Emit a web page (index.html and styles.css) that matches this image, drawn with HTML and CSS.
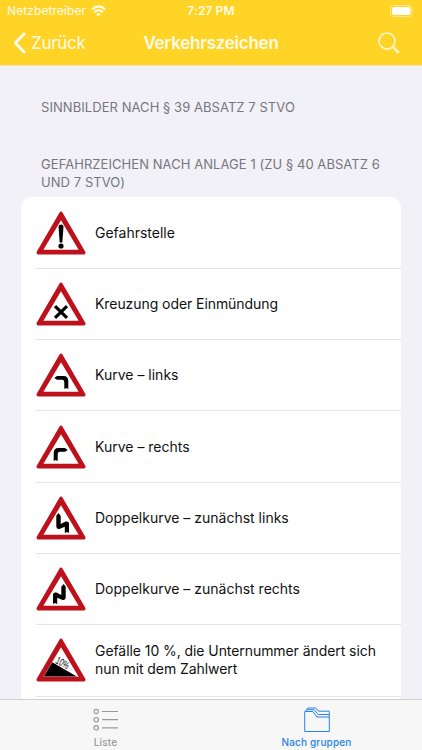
FILE: index.html
```html
<!DOCTYPE html>
<html lang="de">
<head>
<meta charset="utf-8">
<title>Verkehrszeichen</title>
<link rel="stylesheet" href="styles.css">
</head>
<body>
<svg class="defs" width="0" height="0" aria-hidden="true">
  <symbol id="warn" viewBox="0 0 50 44">
    <path d="M25 2.300 47.800 41.700H2.200Z" fill="#bd111b" stroke="#bd111b" stroke-width="3.400" stroke-linejoin="round"/>
    <path d="M25 9.300 42.600 38.800H7.400Z" fill="#fff"/>
  </symbol>
</svg>
<div class="app">
  <header class="header">
    <div class="status">
      <div class="carrier"><span>Netzbetreiber</span>
        <svg width="15" height="12" viewBox="0 0 16 12" fill="none" stroke="#fffbe9" stroke-width="2.300"><path d="M1 4.400Q8-2.100 15 4.400M3.500 7.200Q8 3.200 12.500 7.200"/><path d="M8 11.800 5.500 9.200Q8 7.200 10.500 9.200Z" fill="#fffbe9" stroke="none"/></svg>
      </div>
      <div class="time">7:27 PM</div>
      <svg class="battery" width="25" height="12" viewBox="0 0 25 12"><rect x=".5" y=".5" width="21.500" height="11" rx="3.200" fill="none" stroke="#ffe98f"/><rect x="2" y="2" width="18.500" height="8" rx="2" fill="#fff"/><path d="M23.300 4.200q1.500 1.800 0 3.600Z" fill="#ffe98f"/></svg>
    </div>
    <nav class="nav">
      <div class="back"><svg width="14" height="22" viewBox="0 0 14 22" fill="none" stroke="#fffbe9" stroke-width="3" stroke-linecap="round" stroke-linejoin="round"><path d="M11 2 2.300 11l8.700 9"/></svg><span>Zurück</span></div>
      <h1>Verkehrszeichen</h1>
      <svg class="search" width="22" height="22" viewBox="0 0 22 22" fill="none" stroke="#fff6cf"><circle cx="9" cy="9" r="8" stroke-width="1.600"/><path d="m14.800 14.800 6 6" stroke-width="2.500"/></svg>
    </nav>
  </header>
  <main class="content">
    <h2 class="first">SINNBILDER NACH § 39 ABSATZ 7 STVO</h2>
    <h2 class="second">GEFAHRZEICHEN NACH ANLAGE 1 (ZU § 40 ABSATZ 6<br>UND 7 STVO)</h2>
    <ul class="card">
      <li><svg class="sign" viewBox="0 0 50 44"><use href="#warn"/><path d="M22.500 15.700Q22.500 13.500 25 13.500t2.500 2.200L26.300 31.500h-2.600Z"/><circle cx="25" cy="35" r="2.600"/></svg><p>Gefahrstelle</p></li>
      <li><svg class="sign" viewBox="0 0 50 44"><use href="#warn"/><path d="m19 24.200 12 11.600m0-11.600L19 35.800" stroke="#000" stroke-width="3.200"/></svg><p class="tight">Kreuzung oder Einmündung</p></li>
      <li><svg class="sign" viewBox="0 0 50 44"><use href="#warn"/><path d="m18.300 25 2.700-1.900h6.500q4.800 0 4.800 5.200V36l-2-.9-2 .9v-6.800q0-2.400-2.300-2.400h-5Z"/></svg><p>Kurve – links</p></li>
      <li><svg class="sign" viewBox="0 0 50 44"><use href="#warn"/><path d="m31.700 25-2.700-1.900h-6.500q-4.800 0-4.800 5.200V36l2-.9 2 .9v-6.800q0-2.400 2.300-2.400h5Z"/></svg><p>Kurve – rechts</p></li>
      <li><svg class="sign" viewBox="0 0 50 44"><use href="#warn"/><path d="m22.300 17 2.400 2.700v8.300l4.800-2.400q3.500-.8 3.500 2.500V37l-2-1-2.200 1v-6.300l-4.800 2q-3.700 1-3.700-2.200V19.700Z"/></svg><p>Doppelkurve – zunächst links</p></li>
      <li><svg class="sign" viewBox="0 0 50 44"><use href="#warn"/><path d="m27.700 17-2.400 2.700v8.300l-4.800-2.400q-3.500-.8-3.500 2.500V37l2-1 2.200 1v-6.300l4.800 2q3.700 1 3.700-2.200V19.700Z"/></svg><p>Doppelkurve – zunächst rechts</p></li>
      <li><svg class="sign" viewBox="0 0 50 44"><use href="#warn"/><path d="m16.300 24.300 24.500 14.100H7.800Z"/><text x="18.800" y="24.700" transform="rotate(29 18.800 24.700)" textLength="14" lengthAdjust="spacingAndGlyphs">10%</text></svg><p class="tight">Gefälle 10 %, die Unternummer ändert sich<br>nun mit dem Zahlwert</p></li>
      <li class="peek"></li>
    </ul>
  </main>
  <footer class="tabs">
    <div class="tab"><svg width="26" height="26" viewBox="0 0 26 26" fill="none" stroke="#999" stroke-width="1.200"><circle cx="3.200" cy="4.500" r="2.200"/><circle cx="3.200" cy="12.700" r="2.200"/><circle cx="3.200" cy="20.800" r="2.200"/><path d="M9 4.500h16M9 12.700h16M9 20.800h16"/></svg><span>Liste</span></div>
    <div class="tab active"><svg width="26" height="26" viewBox="0 0 26 26" fill="none" stroke="#2583ea"><path d="M.7 24.500V4.500h8.200l4 5.500h12.400v14.500ZM1.500 4.500 2.700 2.700h7.500l4 4.800h11.100V10M2.700 2.700 3.800 1h8l2.600 3.200h10.900v3.300"/></svg><span>Nach gruppen</span></div>
  </footer>
</div>
</body>
</html>
```

FILE: styles.css
```css
* { box-sizing: border-box; }
body { margin: 0; font-family: Inter, "Liberation Sans", sans-serif; background: #f2f1f7; }
.defs { display: block; }
.app { width: 422px; height: 750px; display: flex; flex-direction: column; overflow: hidden; }
.header { flex: none; height: 66px; background: #ffd426; border-bottom: 1px solid #eee3ae; color: #fffbe9; }
.status { height: 22px; display: grid; grid-template-columns: 1fr auto 1fr; align-items: center; padding: 0 7px; font-size: 12px; line-height: 22px; }
.carrier { display: flex; align-items: center; gap: 5px; letter-spacing: .1px; }
.time { font-weight: 600; letter-spacing: .1px; }
.battery { justify-self: end; }
.nav { height: 42px; display: grid; grid-template-columns: 1fr auto 1fr; align-items: center; padding: 0 22px; }
.back { display: flex; align-items: center; gap: 4px; margin-left: -9px; font-size: 17px; letter-spacing: -.3px; }
h1 { margin: 0; font-size: 17px; font-weight: 600; letter-spacing: -.25px; }
.search { justify-self: end; }
.content { flex: 1; min-height: 0; overflow: hidden; padding: 0 21px; }
h2 { margin: 0; padding-left: 20px; font-size: 13px; line-height: 18.500px; font-weight: 400; letter-spacing: .06px; color: #77767d; white-space: nowrap; }
.first { padding-top: 32px; }
.second { padding-top: 38px; }
.card { list-style: none; margin: 5px 0 0; padding: 1px 0 0 15px; background: #fff; border-radius: 10px 10px 0 0; }
.card li { height: 71.300px; display: flex; align-items: center; border-bottom: 1px solid #e4e4e7; }
.card .peek { border: 0; }
.sign { flex: none; width: 50px; height: 44px; margin-right: 9px; }
.sign text { font: 10.500px "Liberation Sans", sans-serif; }
.card p { margin: 0; font-size: 14px; line-height: 18px; color: #111; white-space: nowrap; }
.card .tight { letter-spacing: -.07px; }
.tabs { flex: none; height: 51px; display: flex; background: #f7f7f7; border-top: 1px solid #d0d0d2; }
.tab { flex: 1; display: flex; flex-direction: column; align-items: center; padding-top: 7px; color: #999; font-size: 10px; font-weight: 500; line-height: 12px; letter-spacing: .15px; }
.tab svg { flex: none; height: 26px; margin-bottom: 3px; }
.tab.active { color: #2583ea; }
```
